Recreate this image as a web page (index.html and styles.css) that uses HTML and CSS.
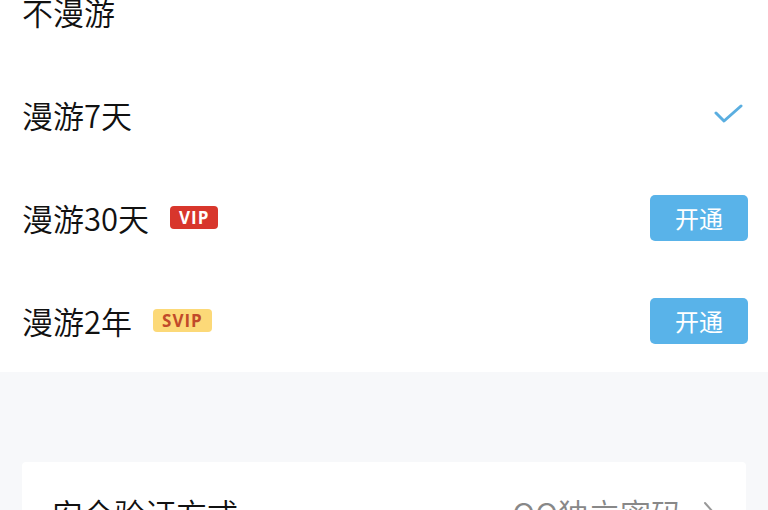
FILE: index.html
```html
<!DOCTYPE html>
<html lang="zh-CN">
<head>
<meta charset="utf-8">
<title>漫游设置</title>
<link rel="stylesheet" href="styles.css">
</head>
<body>
<div class="page">
  <ul class="options">
    <li class="row"><span class="label">不漫游</span></li>
    <li class="row">
      <span class="label">漫游7天</span>
      <svg class="check" width="30" height="22" viewBox="0 0 30 22"><polyline points="2,9 10,17 27,2" fill="none" stroke="#5aaee0" stroke-width="3" stroke-linecap="round" stroke-linejoin="round"/></svg>
    </li>
    <li class="row">
      <span class="label">漫游30天</span>
      <span class="badge vip">VIP</span>
      <span class="btn">开通</span>
    </li>
    <li class="row">
      <span class="label">漫游2年</span>
      <span class="badge svip">SVIP</span>
      <span class="btn">开通</span>
    </li>
  </ul>
  <div class="gray">
    <div class="card">
      <div class="card-row">
        <span class="label">安全验证方式</span>
        <span class="value">QQ独立密码
          <svg class="chev" width="14" height="24" viewBox="0 0 14 24"><polyline points="3,3 11,12 3,21" fill="none" stroke="#999" stroke-width="2" stroke-linecap="round" stroke-linejoin="round"/></svg>
        </span>
      </div>
    </div>
  </div>
</div>
</body>
</html>
```
FILE: styles.css
```css
html, body {
  margin: 0;
  padding: 0;
  background: #f7f8fa;
}
body {
  font-family: "Noto Sans CJK SC", "Noto Sans", sans-serif;
  color: #111;
  width: 768px;
  height: 510px;
  overflow: hidden;
}
.page {
  display: flex;
  flex-direction: column;
}
.options {
  list-style: none;
  margin: -40px 0 0 0;
  padding: 0;
  background: #fff;
}
.row {
  height: 103px;
  display: flex;
  align-items: center;
  padding: 0 20px 0 22px;
}
.label {
  font-size: 31px;
  line-height: 1;
  font-weight: 350;
}
.check {
  margin-left: auto;
  margin-right: 4px;
}
.badge {
  margin-left: 21px;
  height: 23px;
  padding: 0 9px;
  border-radius: 4px;
  font-family: "Open Sans", "Noto Sans", sans-serif;
  font-weight: 700;
  font-size: 17px;
  line-height: 23px;
  letter-spacing: 1px;
}
.vip {
  background: #d8362c;
  color: #fff;
}
.svip {
  background: #fcd978;
  color: #c14a2a;
}
.btn {
  margin-left: auto;
  width: 98px;
  height: 46px;
  border-radius: 5px;
  background: #59b3e9;
  color: #fff;
  font-size: 24px;
  display: flex;
  align-items: center;
  justify-content: center;
}
.gray {
  padding: 90px 22px 0 22px;
}
.card {
  background: #fff;
  border-radius: 4px;
}
.card-row {
  height: 100px;
  display: flex;
  align-items: center;
  justify-content: space-between;
  padding: 0 30px 0 30px;
}
.value {
  font-size: 31px;
  font-weight: 350;
  color: #888;
  display: flex;
  align-items: center;
  gap: 20px;
}
```
